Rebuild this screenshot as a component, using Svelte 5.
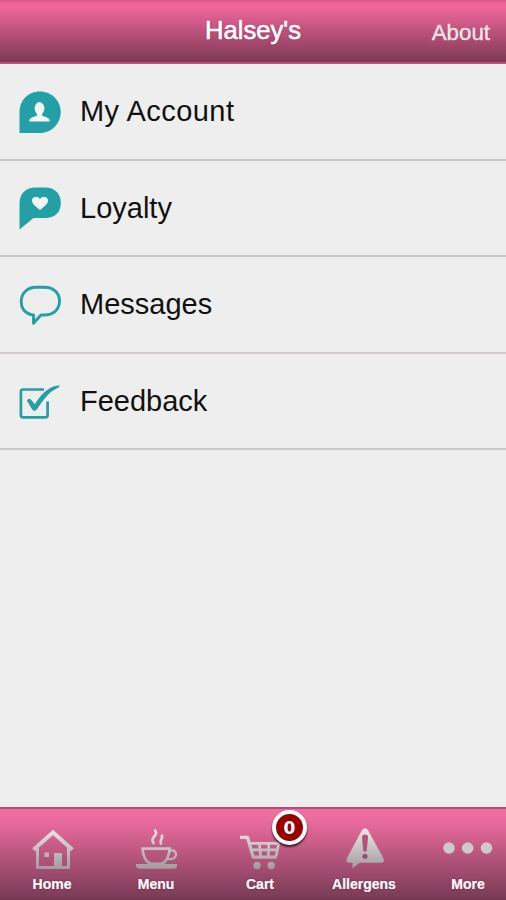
<script lang="ts">
  type Row = { id: string; label: string };

  const rows: Row[] = [
    { id: 'account', label: 'My Account' },
    { id: 'loyalty', label: 'Loyalty' },
    { id: 'messages', label: 'Messages' },
    { id: 'feedback', label: 'Feedback' },
  ];

  const tabs: Row[] = [
    { id: 'home', label: 'Home' },
    { id: 'menu', label: 'Menu' },
    { id: 'cart', label: 'Cart' },
    { id: 'allergens', label: 'Allergens' },
    { id: 'more', label: 'More' },
  ];

  let cartCount = $state(0);
</script>

<div class="screen">
  <header class="bar">
    <h1 class="bar__title">Halsey's</h1>
    <button class="bar__action" type="button">About</button>
  </header>

  <main class="list">
    {#each rows as row (row.id)}
      <button class="row row--{row.id}" type="button">
        <svg class="row__icon" viewBox="0 0 44 44" aria-hidden="true">
          {#if row.id === 'account'}
            <path fill="#239fa6" d="M1.500 43V22C1.500 10 10.500 1.500 22 1.500S42.700 10.500 42.700 22 33.500 43 22 43Z" />
            <ellipse cx="21.500" cy="18.300" rx="4.900" ry="6.200" fill="#f2f6f6" />
            <path fill="#f2f6f6" d="M18.800 23h5.400v3c3.800.8 7.600 1.800 7.600 5.500H11.200c0-3.700 3.800-4.700 7.600-5.500Z" />
          {:else if row.id === 'loyalty'}
            <path fill="#239fa6" d="M1.500 43.500V18C1.500 7 8 1.500 18 1.500h9c10 0 15.800 6 15.800 15.500S37 32 27 32H15.500Z" />
            <path fill="#f2f6f6" d="M22 24.200C17.500 20.500 14 18 14 14.600c0-4.300 5.600-5.400 8-1.500 2.400-3.900 8-2.800 8 1.500 0 3.400-3.500 5.900-8 9.600Z" />
          {:else if row.id === 'messages'}
            <path
              fill="none"
              stroke="#239fa6"
              stroke-width="2.900"
              stroke-linejoin="round"
              d="M12.500 31.500C6.500 29.500 3.200 24.500 3.200 18.500 3.200 10 9.500 4.300 18 4.300h8.500C35.500 4.300 41.500 10 41.500 18S36 32 26.500 32H23L15.500 40.300V32Z"
            />
          {:else}
            <path
              fill="none"
              stroke="#239fa6"
              stroke-width="2.700"
              stroke-linejoin="round"
              d="M26 10.500H5q-2.100 0-2.100 2.100V36.200q0 2.100 2.100 2.100H27.500q2.100 0 2.100-2.100V22.500"
            />
            <path fill="#239fa6" d="M8.800 21.500q2.500-3.500 5 0L16.800 25.300C24 14 32 6.500 42 6.600L40.500 8.600C31.500 12.500 26 20 19 30.200Q16.500 33.500 14 30.200Z" />
          {/if}
        </svg>
        <span class="row__label">{row.label}</span>
      </button>
    {/each}
  </main>

  <nav class="tabs">
    {#each tabs as tab (tab.id)}
      <button class="tab" type="button">
        <svg class="tab__icon" viewBox="0 0 52 48" aria-hidden="true">
          <defs>
            <linearGradient id="silver-{tab.id}" gradientUnits="userSpaceOnUse" x1="0" y1="6" x2="0" y2="45">
              <stop offset="0" stop-color="#e8e4e6" />
              <stop offset="1" stop-color="#a29a9e" />
            </linearGradient>
          </defs>
          {#if tab.id === 'home'}
            <g fill="none" stroke="url(#silver-home)">
              <path stroke-width="3" d="M11.500 23.500V43.500H42.500V23.500" />
              <path stroke-width="4" d="m7.500 25.800 19.500-17.300L46.500 25.800" />
            </g>
            <path fill="url(#silver-home)" d="M18.500 28.500h4.500V33h-4.500ZM28 29h8v15h-8Z" />
          {:else if tab.id === 'menu'}
            <g fill="none" stroke="url(#silver-menu)" stroke-width="2.600">
              <path d="M12.500 24.600H39.600C39.600 32 35.500 38.700 31.500 39.700H21C16.500 38.700 12.500 32 12.500 24.600Z" />
              <path stroke-width="2.300" d="M39.500 27c3.500-1.800 6.500.2 6.500 3.600s-3.500 5.200-8 4.200" />
              <path stroke-width="2.600" d="M24.500 5.500c3 3.700 1.200 5.400-.9 7.800-1.600 2.300-1.700 4.200.7 6.700M31.500 10.700c1.200 2.200.7 3.600-.3 5-1 1.600-.9 2.800.2 4.800" />
            </g>
            <path fill="url(#silver-menu)" d="M6 40H47v2q-.5 2.800-3.500 2.800H9.500Q6.500 44.800 6 42Z" />
          {:else if tab.id === 'cart'}
            <g fill="none" stroke="url(#silver-cart)" stroke-linejoin="round">
              <path stroke-width="3.200" d="M6 13.300h7.500L19.300 33.200H42.500" />
              <path stroke-width="2.700" d="M15.500 19.300H44.700L42 32.500M17.500 25.800H43.500M25.500 19.300 26.500 32M34.800 19.300 34.300 32" />
            </g>
            <g fill="url(#silver-cart)">
              <circle cx="23" cy="41.500" r="3.700" />
              <circle cx="37.200" cy="41.500" r="3.700" />
            </g>
          {:else if tab.id === 'allergens'}
            <path
              fill="url(#silver-allergens)"
              d="M23.800 6.500Q27 1.800 30.200 6.500L45.300 34q2 4.500-2.500 4.700H21.500L14.500 44.500V38.700H11.500Q7 38.500 9 34Z"
            />
            <path fill="#b45179" d="M24 13.200q0-2.700 3-2.700t3 2.700L28.800 26.500q-1.800 2.500-3.600 0Z" />
            <circle cx="27" cy="32.300" r="2.600" fill="#a34c70" />
          {:else}
            <g fill="#cfc9cc">
              <circle cx="7" cy="24" r="5.800" />
              <circle cx="25.700" cy="24" r="5.800" />
              <circle cx="44.500" cy="24" r="5.800" />
            </g>
          {/if}
        </svg>
        <span class="tab__label">{tab.label}</span>
        {#if tab.id === 'cart'}
          <span class="badge">{cartCount}</span>
        {/if}
      </button>
    {/each}
  </nav>
</div>

<style>
  :global(body) {
    background: #eee;
  }
  .screen {
    display: flex;
    flex-direction: column;
    height: 900px;
    overflow: hidden;
    background: #eee;
    font-family: 'Liberation Sans', Arial, sans-serif;
  }
  button {
    margin: 0;
    padding: 0;
    border: 0;
    background: none;
    font: inherit;
    color: inherit;
  }
  .bar {
    display: grid;
    grid-template-columns: 1fr auto 1fr;
    align-items: center;
    box-sizing: border-box;
    height: 64px;
    flex: none;
    color: #fff;
    background: linear-gradient(#dc5888 0, #f2649a 4px, #ee659a 8px, #7e3a55 61px);
    border-bottom: 2px solid #c84e78;
  }
  .bar__title {
    grid-column: 2;
    margin: 0;
    padding-bottom: 2px;
    font-size: 25.6px;
    font-weight: 400;
    -webkit-text-stroke: 0.6px #fff;
    text-shadow: 0 0 2px rgba(120, 20, 60, 0.5);
  }
  .bar__action {
    justify-self: end;
    padding: 3px 16px 0 0;
    font-size: 22.3px;
    color: #f8e6ed;
    -webkit-text-stroke: 0.3px #f8e6ed;
  }
  .list {
    flex: 1;
  }
  .row {
    display: flex;
    align-items: center;
    gap: 18px;
    box-sizing: border-box;
    width: 100%;
    height: 96.5px;
    padding: 1px 0 0 18px;
    border-bottom: 2px solid #cbc8c9;
    text-align: left;
  }
  .row--messages {
    border-bottom-color: #d6c5cb;
  }
  .row__icon {
    width: 44px;
    height: 44px;
  }
  .row__label {
    font-size: 29px;
    color: #111;
  }
  .row--account .row__label {
    letter-spacing: 0.45px;
  }
  .tabs {
    display: grid;
    grid-template-columns: repeat(5, 104px);
    box-sizing: border-box;
    height: 93px;
    flex: none;
    border-top: 2px solid #b64d78;
    background: linear-gradient(#ed70a0 0, #ea6b9d 12px, #763a53 100%);
  }
  .tab {
    position: relative;
    display: flex;
    flex-direction: column;
    align-items: center;
    padding-top: 15px;
  }
  .tab__icon {
    width: 52px;
    height: 48px;
  }
  .tab__label {
    margin-top: 3px;
    font-size: 14px;
    line-height: 18px;
    font-weight: 700;
    color: #fff;
    -webkit-text-stroke: 0.2px #fff;
    text-shadow: 0 0 2px rgba(110, 10, 50, 0.6);
  }
  .badge {
    position: absolute;
    top: 1px;
    left: 64px;
    box-sizing: border-box;
    width: 35px;
    height: 35px;
    border: 4px solid #fff;
    border-radius: 50%;
    background: #980000;
    box-shadow: 0 2px 2px rgba(40, 10, 25, 0.8);
    color: #fff;
    font-family: 'DejaVu Sans', sans-serif;
    font-size: 17px;
    font-weight: 700;
    line-height: 29px;
    text-align: center;
  }
</style>
